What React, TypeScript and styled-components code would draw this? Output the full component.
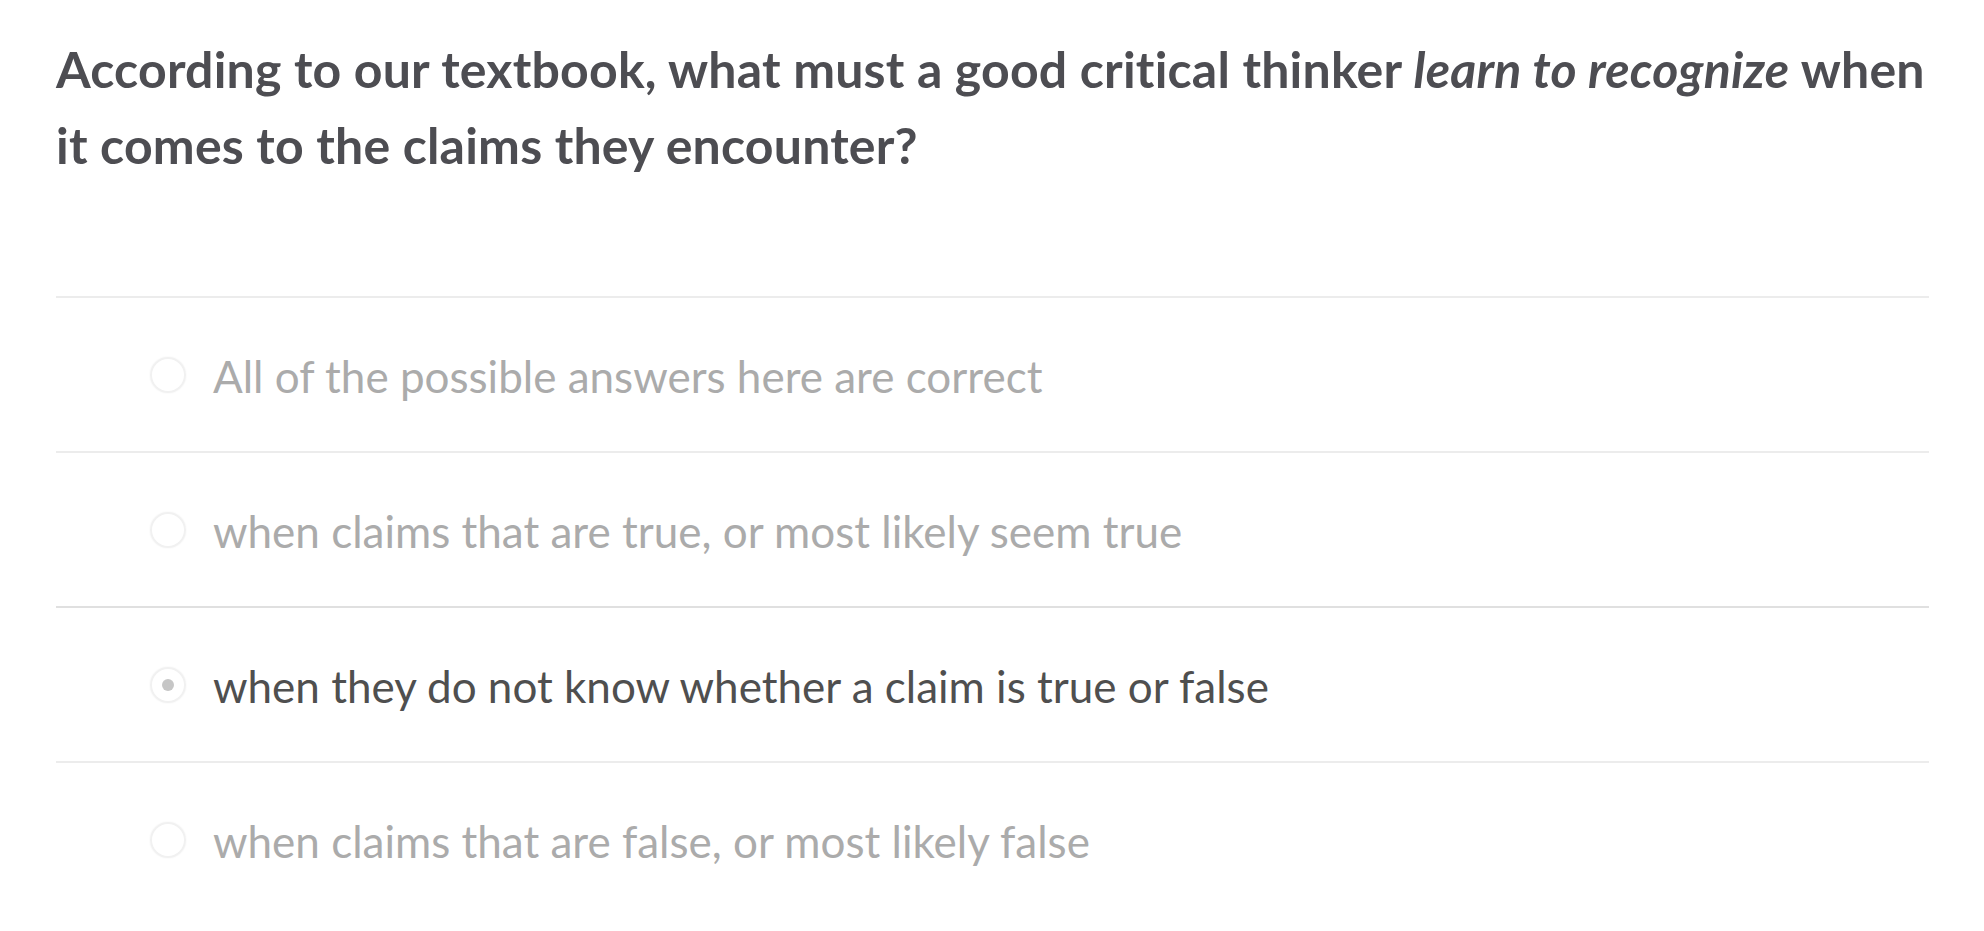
import styled, { createGlobalStyle } from 'styled-components';

const GlobalStyle = createGlobalStyle`
  html, body {
    margin: 0;
    padding: 0;
    background: #ffffff;
  }
  body {
    font-family: Lato, 'Open Sans', 'Liberation Sans', sans-serif;
  }
`;

const Page = styled.div`
  padding: 31px 55px 0 56px;
`;

const Question = styled.h2`
  margin: 0 0 113px;
  font-size: 50px;
  line-height: 76px;
  letter-spacing: 0.2px;
  font-weight: 700;
  color: #4d4d52;

  em {
    font-style: italic;
  }
`;

const OptionList = styled.ul`
  list-style: none;
  margin: 0;
  padding: 0;
`;

const Option = styled.li<{ $dark?: boolean }>`
  display: flex;
  align-items: center;
  gap: 27px;
  height: 153px;
  padding-left: 94px;
  border-top: 2px solid ${(props) => (props.$dark ? '#e0e0e0' : '#ececec')};
`;

const Radio = styled.span<{ $checked?: boolean }>`
  width: 36px;
  height: 36px;
  flex: none;
  box-sizing: border-box;
  border-radius: 50%;
  border: 2px solid #f1f1f1;
  box-shadow: 0 0 2px rgba(0, 0, 0, 0.06);
  display: flex;
  align-items: center;
  justify-content: center;

  &::after {
    content: '';
    display: ${(props) => (props.$checked ? 'block' : 'none')};
    width: 12px;
    height: 12px;
    border-radius: 50%;
    background: #c6c6c6;
  }
`;

const Label = styled.span<{ $selected?: boolean }>`
  font-size: 44px;
  line-height: 1.2;
  padding-top: 4px;
  color: ${(props) => (props.$selected ? '#4f4f4f' : '#ababab')};
`;

const answers = [
  'All of the possible answers here are correct',
  'when claims that are true, or most likely seem true',
  'when they do not know whether a claim is true or false',
  'when claims that are false, or most likely false',
];

const selectedIndex = 2;

export default function App() {
  return (
    <Page>
      <GlobalStyle />
      <Question>
        According to our textbook, what must a good critical thinker <em>learn to recognize</em> when it
        comes to the claims they encounter?
      </Question>
      <OptionList>
        {answers.map((text, i) => (
          <Option key={text} $dark={i === selectedIndex}>
            <Radio $checked={i === selectedIndex} />
            <Label $selected={i === selectedIndex}>{text}</Label>
          </Option>
        ))}
      </OptionList>
    </Page>
  );
}
